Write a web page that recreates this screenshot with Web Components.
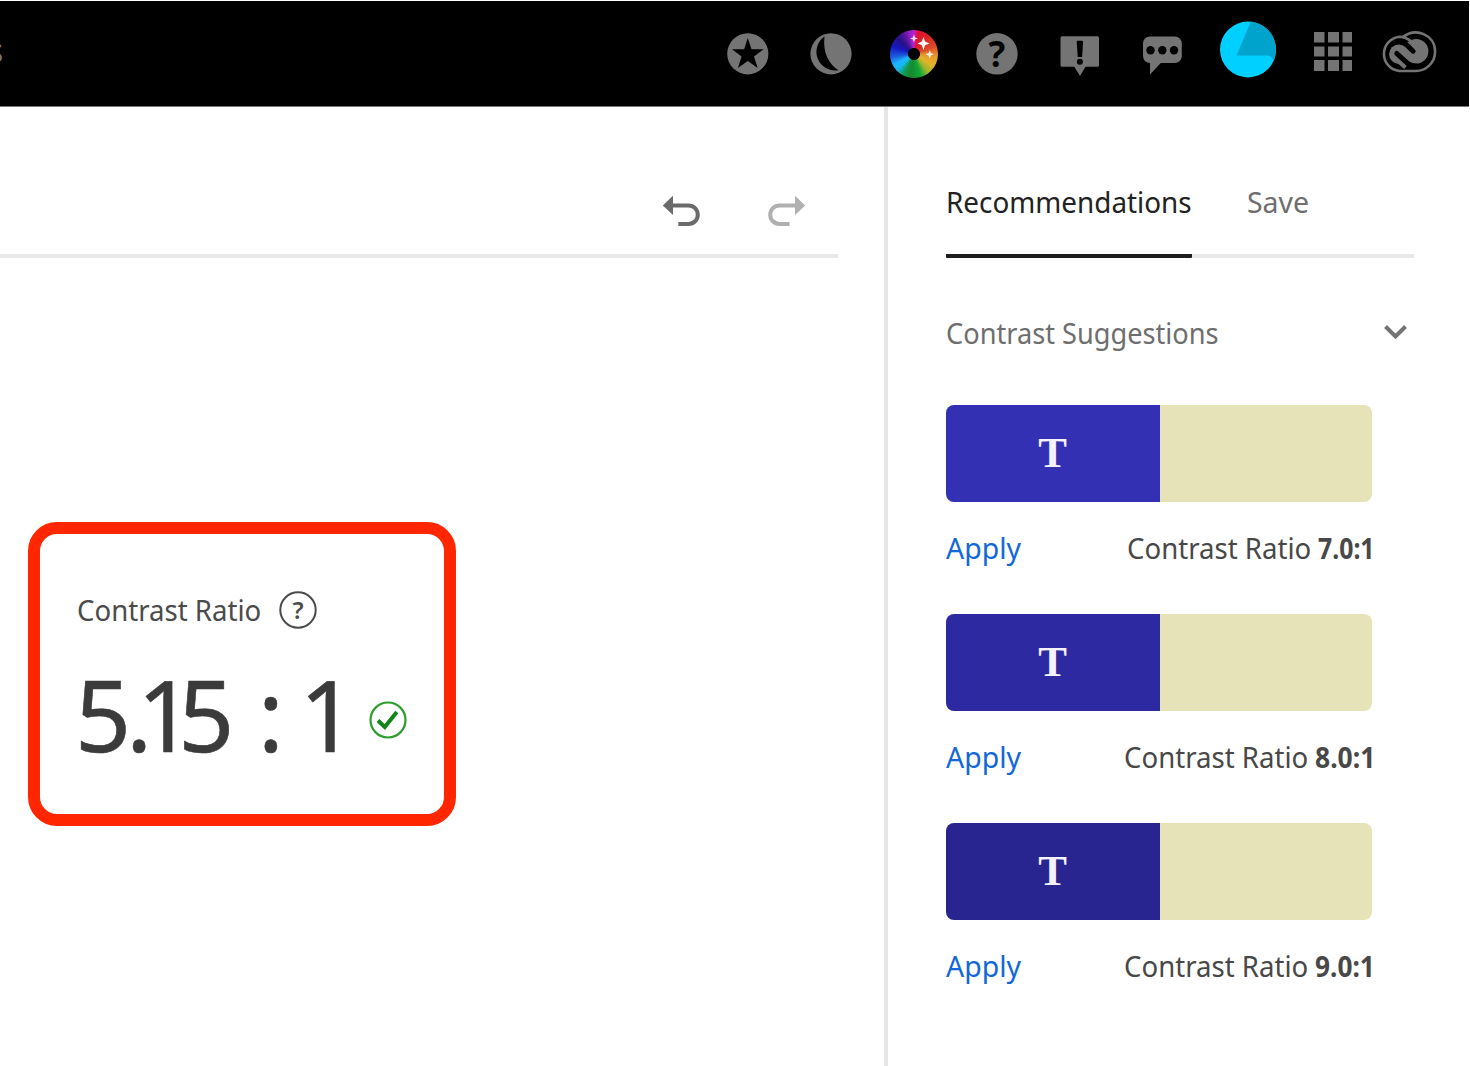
<!DOCTYPE html>
<html lang="en">
<head>
<meta charset="utf-8">
<title>Contrast Checker</title>
<style>
html,body{margin:0;padding:0;background:#fff}
body{font-family:"Noto Sans","Open Sans",sans-serif;width:1470px;height:1066px;overflow:hidden}
</style>
</head>
<body>
<contrast-app></contrast-app>
<script>
const define = (name, html, setup) => {
  const tpl = document.createElement('template');
  tpl.innerHTML = html;
  customElements.define(name, class extends HTMLElement {
    connectedCallback() {
      if (this.shadowRoot) return;
      this.attachShadow({mode: 'open'}).append(tpl.content.cloneNode(true));
      if (setup) setup(this, this.shadowRoot);
    }
  });
};

/* Text whose visible ink fills exactly the given width. */
const ctx = document.createElement('canvas').getContext('2d');
define('fit-text', `<style>
:host{display:block;flex:none;white-space:pre;line-height:40px;height:40px}
span{display:inline-block;transform-origin:0 50%}
</style><span></span>`, (host, root) => {
  const span = root.querySelector('span');
  const size = host.getAttribute('size') || 29, weight = host.getAttribute('weight') || 400;
  const width = +host.getAttribute('width');
  const text = host.getAttribute('text');
  span.textContent = text;
  host.style.cssText += `;width:${width}px;font-size:${size}px;font-weight:${weight}`;
  ctx.font = `${weight} ${size}px "Noto Sans"`;
  const m = ctx.measureText(text);
  const k = width / (m.actualBoundingBoxLeft + m.actualBoundingBoxRight);
  span.style.transform = `translateX(${m.actualBoundingBoxLeft * k}px) scaleX(${k})`;
});

define('color-wheel', `<style>
:host{display:flex;flex:none;width:56px;height:60px;justify-content:center}
div{width:48px;height:48px;margin-top:5.7px;border-radius:50%;
background:radial-gradient(circle,#000 0 5.6px,transparent 6.4px),conic-gradient(#c31bd0 0deg,#e0122c 12deg,#dc2024 35deg,#dd4a28 70deg,#e59a2c 95deg,#e5b329 120deg,#a2b52a 142deg,#10a838 162deg,#148a2c 190deg,#129a50 208deg,#16b8ee 226deg,#1bb4ff 242deg,#1b5fdd 262deg,#1717c0 290deg,#25108a 315deg,#5b169c 334deg,#a124d0 352deg,#c31bd0 360deg)}
svg{display:block}
</style><div><svg width="48" height="48" fill="#fff">
<path d="M33.5 7 L35 11.5 L39.5 13.5 L35 15.3 L33.5 20 L31.8 15.3 L27.5 13.5 L31.8 11.5Z"/>
<path opacity=".85" d="M24 4.5 L25 7.6 L28 8.6 L25 9.6 L24 12.5 L23 9.6 L20 8.6 L23 7.6Z"/>
<path opacity=".85" d="M39.7 20 L40.8 23 L44 24.2 L40.8 25.4 L39.7 28.5 L38.6 25.4 L35.4 24.2 L38.6 23Z"/>
</svg></div>`);

const icons = {
  star: [720, '<circle cx="747.8" cy="53.8" r="20.6"/><path fill="#000" d="M747.8 38 L751.5 49.3 L763.6 49.3 L754 56.5 L757.7 68 L747.8 61 L737.9 68 L741.6 56.5 L732 49.3 L744.1 49.3Z"/>'],
  moon: [803, '<circle cx="831" cy="53.8" r="20.6"/><path fill="#000" d="M824.5 36.6 A18.600 18.600 0 0 0 838.5 70.2 C829 64.5 822.5 53 824.5 36.6Z"/>'],
  help: [969, '<circle cx="997" cy="53.8" r="20.7"/><text x="996.9" y="67" fill="#000" font-size="35" font-weight="700" text-anchor="middle">?</text>'],
  alert: [1052, '<path d="M1062 36.2h35.500q1.500 0 1.500 1.500v27.500q0 1.500-1.500 1.500h-12L1080 76l-5.700-9.300h-12.300q-1.500 0-1.500-1.500v-27.500q0-1.500 1.500-1.500Z"/><path fill="#000" d="M1076.700 42q0-1.200 1.200-1.200h4q1.200 0 1.200 1.200l-1 15h-4.400Z"/><circle fill="#000" cx="1079.900" cy="61.700" r="3"/>'],
  chat: [1135.7, '<path d="M1150.500 36.500h25a7 7 0 0 1 7 7v12.500a7 7 0 0 1-7 7h-14L1150.700 74.500v-11.500a7 7 0 0 1-7-7v-12.500a7 7 0 0 1 6.800-7Z"/><g fill="#000"><circle cx="1151.200" cy="50.200" r="4.200"/><circle cx="1163" cy="50.200" r="4.200"/><circle cx="1174.700" cy="50.200" r="4.200"/></g>'],
  avatar: [1220, '<circle cx="1248" cy="49.500" r="28" fill="#00d0ff"/><path fill="#00a3cc" d="M1250.800 21.600 A28 28 0 0 1 1273.800 60.500 Q1271.500 55.500 1268 55.500H1236.500Z"/>'],
  grid: [1305, '<path d="M1314 32h10.500v10.500H1314zM1328 32h11v10.500H1328zM1342.500 32h9.500v10.500H1342.500zM1314 46.500h10.500v10H1314zM1328 46.500h11v10H1328zM1342.500 46.500h9.500v10H1342.500zM1314 60h10.500v11H1314zM1328 60h11v11H1328zM1342.500 60h9.500v11H1342.500z"/>'],
  cloud: [1383.2, '<path fill="none" stroke="#747474" stroke-width="2.600" d="M1403 37.800 C1417 26.500 1436.300 34.500 1436.300 51.800 A19.300 19.300 0 0 1 1417 71 H1400.500 A17.200 17.200 0 0 1 1400.500 36.800 C1406 36.800 1409.500 39 1412.800 41.800"/><circle cx="1417.300" cy="51.300" r="12.300"/><circle cx="1400" cy="54.200" r="9.700"/><path fill="none" stroke="#747474" stroke-width="8" d="M1402 49L1414 60M1400 59L1408 66"/><path fill="none" stroke="#000" stroke-width="5" stroke-linecap="round" d="M1398 53.500L1408.500 63.200Q1412 66.300 1417 66.300M1403 42.200Q1406 43 1408 45L1414.300 51.200"/>']
};
define('nav-icon', `<style>
:host{display:block;flex:none;width:56px;height:64px}
svg{display:block;font-family:"Noto Sans",sans-serif}
</style><svg width="56" height="64" fill="#747474"></svg>`, (host, root) => {
  const [x, body] = icons[host.getAttribute('name')];
  const svg = root.querySelector('svg');
  svg.setAttribute('viewBox', `${x} 20 56 64`);
  svg.innerHTML = body;
});

define('top-bar', `<style>
:host{display:flex;box-sizing:border-box;width:1469px;height:106px;margin-top:1px;background:#000;border-bottom:1px solid #777;align-items:flex-start;justify-content:space-between}
.nav{width:3px;overflow:hidden;padding-top:26px;color:#777;font-size:34px;line-height:46px;height:46px}
.nav span{display:block;margin-left:-13px}
.icons{display:flex;gap:27px;padding:19px 31px 0 0}
color-wheel{margin-top:4px}
nav-icon[name=avatar],nav-icon[name=grid]{margin-left:2px}
nav-icon[name=cloud]{margin-left:-6px}
</style><div class="nav"><span>s</span></div><div class="icons">
<nav-icon name="star"></nav-icon><nav-icon name="moon"></nav-icon><color-wheel></color-wheel>
<nav-icon name="help"></nav-icon><nav-icon name="alert"></nav-icon><nav-icon name="chat"></nav-icon>
<nav-icon name="avatar"></nav-icon><nav-icon name="grid"></nav-icon><nav-icon name="cloud"></nav-icon></div>`);

define('history-bar', `<style>
:host{display:flex;box-sizing:border-box;width:838px;height:151px;border-bottom:4px solid #e8e8e8;justify-content:flex-end;padding:84px 30px 0 0;gap:63px}
svg{display:block}
</style>
<svg width="42" height="42" viewBox="661 191 42 42"><path fill="#6a6a6a" d="M662.800 205.500L673 195.700V215Z"/><path fill="none" stroke="#6a6a6a" stroke-width="4" d="M672 205.400H688.500A9.200 9.200 0 0 1 688.500 224H678.300"/></svg>
<svg width="42" height="42" viewBox="766 191 42 42"><path fill="#b0b0b0" d="M805.200 205.500L795 195.700V215Z"/><path fill="none" stroke="#b0b0b0" stroke-width="4" d="M796 205.400H779.500A9.200 9.200 0 0 0 779.500 224H789.500"/></svg>`);

define('ratio-card', `<style>
:host{display:flex;flex-direction:column;box-sizing:border-box;width:428px;height:304px;margin:264px 0 0 28.400px;border:12px solid #ff2600;border-radius:29px;padding:56px 0 0 37.500px;color:#4b4b4b}
.label{display:flex;align-items:center;gap:19px}
.value{display:flex;align-items:center;gap:29px;margin-top:29px;color:#3b3b3b}
.num{font-size:98px;line-height:110px;height:110px;white-space:nowrap;width:265px;margin-left:-3px;-webkit-text-stroke:.6px #3b3b3b}
.a{letter-spacing:-5px}.dot{letter-spacing:-15px}.one{letter-spacing:-15px}.five{letter-spacing:-2px}.colon{letter-spacing:-10px}
svg{display:block;flex:none;font-family:"Noto Sans",sans-serif}
.ok{margin-top:12px}
</style>
<div class="label"><fit-text text="Contrast Ratio" width="182" size="28.500"></fit-text>
<svg width="38" height="38"><circle cx="19" cy="19" r="17.700" fill="none" stroke="#4b4b4b" stroke-width="2"/><text x="19" y="27.500" font-size="24" font-weight="600" text-anchor="middle" fill="#4b4b4b">?</text></svg></div>
<div class="value"><div class="num"><span class="a">5</span><span class="dot">.</span><span class="one">1</span><span class="five">5</span> <span class="colon">:</span> <span>1</span></div>
<svg class="ok" width="38" height="38"><circle cx="19" cy="19" r="17.500" fill="none" stroke="#2d9d2d" stroke-width="2.200"/><path d="M9 19.500L15.800 26L27.800 11" fill="none" stroke="#12851a" stroke-width="4"/></svg></div>`);

define('panel-tabs', `<style>
:host{display:flex;box-sizing:border-box;width:468px;height:151px;border-bottom:4px solid #e8e8e8;padding-top:75px;gap:56px}
.active{height:72px;border-bottom:4px solid #1e1e1e;border-radius:1px;padding-left:2px;box-sizing:border-box;height:76px;color:#222;width:246px}
.save{color:#6e6e6e}
</style><div class="active"><fit-text text="Recommendations" width="243" size="28.500"></fit-text></div>
<fit-text class="save" text="Save" width="60" size="28.500"></fit-text>`);

define('section-title', `<style>
:host{display:flex;width:462px;justify-content:space-between;align-items:center;padding-left:1px;box-sizing:border-box;margin-top:54.500px;color:#6e6e6e}
svg{display:block;margin-top:-2px}
</style><fit-text text="Contrast Suggestions" width="271" size="28.500"></fit-text>
<svg width="26" height="18"><path d="M3.500 3.500L13.500 13.500L23.500 3.500" fill="none" stroke="#747474" stroke-width="4"/></svg>`);

define('suggestion-card', `<style>
:host{display:block;width:428px;height:209px}
.swatch{display:flex;width:426px;height:96.500px;border-radius:8px;overflow:hidden}
.fg{width:214px;background:var(--tone);color:#f4f2ff;display:flex;justify-content:center;font:bold 43px/96px "Liberation Serif",serif;box-sizing:border-box;padding-right:1px}
.bg{flex:1;background:#e5e3b7}
.row{display:flex;align-items:center;margin-top:26px;height:40px;color:#484848}
.apply{color:#1268d8;margin-right:auto}
</style><div class="swatch"><div class="fg">T</div><div class="bg"></div></div>
<div class="row"><fit-text class="apply" text="Apply" width="75.500" size="28.500"></fit-text>
<slot></slot></div>`);

define('ratio-label', `<style>
:host{display:flex;gap:8px;margin-right:3px}
</style><fit-text text="Contrast Ratio" width="182" size="28.500"></fit-text><slot></slot>`);

define('contrast-app', `<style>
:host{display:block;width:1470px;height:1066px;overflow:hidden;background:#fff}
.body{display:flex;height:959px}
main{width:884px;flex:none}
aside{box-sizing:border-box;width:586px;border-left:4.500px solid #e6e6e6;padding-left:58px}
.list{margin-top:52.500px}
</style><top-bar></top-bar><div class="body">
<main><history-bar></history-bar><ratio-card></ratio-card></main>
<aside><panel-tabs></panel-tabs><section-title></section-title>
<div class="list">
<suggestion-card style="--tone:#3430b3"><ratio-label><fit-text text="7.0:1" width="53" weight="700" size="28"></fit-text></ratio-label></suggestion-card>
<suggestion-card style="--tone:#2d2aa1"><ratio-label><fit-text text="8.0:1" width="56.500" weight="700" size="28"></fit-text></ratio-label></suggestion-card>
<suggestion-card style="--tone:#282590"><ratio-label><fit-text text="9.0:1" width="56" weight="700" size="28"></fit-text></ratio-label></suggestion-card>
</div></aside></div>`);
</script>
</body>
</html>
